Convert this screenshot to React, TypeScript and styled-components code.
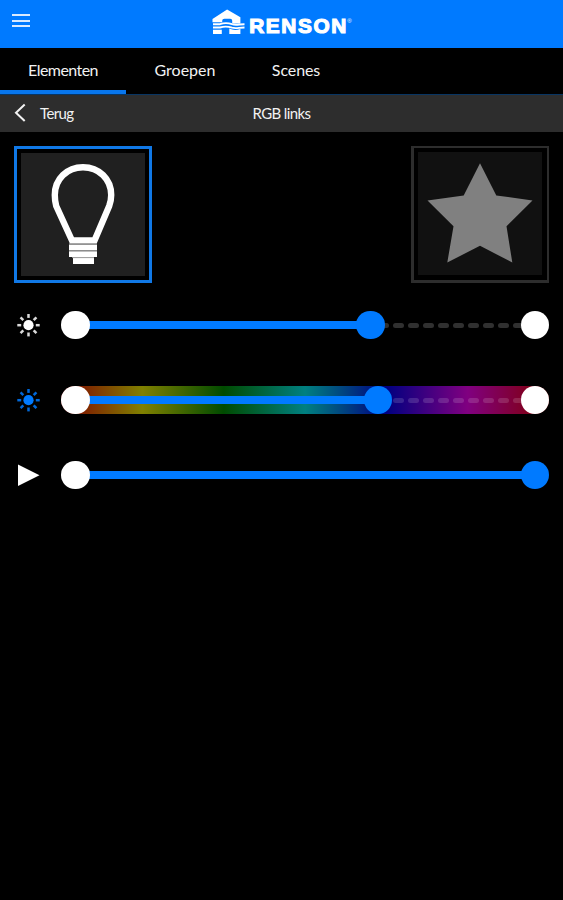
import React from "react";
import styled, { createGlobalStyle } from "styled-components";

const BLUE = "#007aff";

const GlobalStyle = createGlobalStyle`
  * { box-sizing: border-box; }
  body { margin: 0; background: #000; }
`;

const Screen = styled.div`
  display: flex;
  flex-direction: column;
  height: 900px;
  overflow: hidden;
  background: #000;
  color: #f2f2f2;
  font-family: Lato, "Liberation Sans", sans-serif;
`;

const Header = styled.header`
  display: grid;
  grid-template-columns: 60px 1fr 60px;
  height: 48px;
  background: ${BLUE};
`;

const MenuButton = styled.button`
  display: flex;
  flex-direction: column;
  gap: 3.5px;
  padding: 14px 0 0 12px;
  border: 0;
  background: none;
`;

const MenuBar = styled.span`
  width: 18px;
  height: 2px;
  background: #d9eaff;
`;

const Brand = styled.div`
  display: flex;
  justify-content: center;

  svg { display: block; margin-left: 1px; }
`;

const Tabs = styled.nav`
  display: flex;
  height: 47px;
  border-bottom: 1px solid #083563;
`;

const Tab = styled.button<{ $active?: boolean; $width: number; $spacing: number }>`
  width: ${(p) => p.$width}px;
  height: 46px;
  padding: 1px 0 0;
  border: 0;
  border-bottom: 4px solid ${(p) => (p.$active ? "#0876ed" : "transparent")};
  background: none;
  color: inherit;
  font: 400 16px/20px Lato, sans-serif;
  letter-spacing: ${(p) => p.$spacing}px;
  white-space: nowrap;
`;

const SubHeader = styled.div`
  display: grid;
  grid-template-columns: 120px 1fr 120px;
  align-items: center;
  height: 37px;
  padding-bottom: 2px;
  background: #2d2d2d;
  font-size: 15px;
  line-height: 20px;
`;

const BackButton = styled.button`
  display: flex;
  align-items: center;
  gap: 13px;
  padding: 0 0 0 14px;
  border: 0;
  background: none;
  color: inherit;
  font: inherit;
  letter-spacing: -0.6px;
`;

const Title = styled.span`
  text-align: center;
  letter-spacing: -0.6px;
`;

const Tiles = styled.div`
  display: flex;
  justify-content: space-between;
  padding: 14px 14px 0;
`;

const Tile = styled.div<{ $active?: boolean }>`
  width: 138px;
  height: 137px;
  padding: 4px;
  border: 3px solid ${(p) => (p.$active ? "#1078e6" : "#2d2d2d")};
  border-width: ${(p) => (p.$active ? "3px" : "2.5px 2px 3px 3px")};

  svg {
    display: block;
    width: 124px;
    height: 123px;
    background: ${(p) => (p.$active ? "#202020" : "#111")};
  }
`;

const Sliders = styled.div`
  display: flex;
  flex-direction: column;
  gap: 47px;
  padding: 28px 14px 0;
`;

const SliderRow = styled.div`
  display: grid;
  grid-template-columns: 28px 488px;
  column-gap: 19px;
  align-items: center;
  height: 28px;

  > svg { display: block; }
`;

const Track = styled.div<{ $rainbow?: boolean }>`
  position: relative;
  height: 28px;
  border-radius: 14px;
  background: ${(p) =>
    p.$rainbow
      ? "linear-gradient(90deg, #800000 0%, #808000 16.67%, #004b00 33.33%, #008080 50%, #000080 66.67%, #800080 83.33%, #800000 100%)"
      : "none"};
`;

const Dashes = styled.div`
  position: absolute;
  top: 12px;
  left: 17px;
  display: flex;
  gap: 4px;
  width: 443px;
  height: 5px;
  overflow: hidden;
`;

const Dash = styled.span<{ $faint?: boolean }>`
  flex: 0 0 11px;
  border-radius: 2.5px;
  background: rgba(255, 255, 255, ${(p) => (p.$faint ? 0.14 : 0.19)});
`;

const Fill = styled.div`
  position: absolute;
  top: 10px;
  left: 14px;
  height: 8px;
  background: ${BLUE};
`;

const Knob = styled.span<{ $blue?: boolean }>`
  position: absolute;
  top: -0.3px;
  width: 28.6px;
  height: 28.6px;
  margin-left: -14.3px;
  border-radius: 50%;
  background: ${(p) => (p.$blue ? BLUE : "#fff")};
`;

const START = 14.3;
const SPAN = 459.5;

function Slider({ value, rainbow }: { value: number; rainbow?: boolean }) {
  const pos = START + value * SPAN;
  return (
    <Track $rainbow={rainbow}>
      {value < 1 && (
        <Dashes>
          {Array.from({ length: 30 }, (_, i) => (
            <Dash
              key={i}
              $faint={rainbow}
              style={{ visibility: 17 + i * 15 + 11 < pos ? "hidden" : "visible" }}
            />
          ))}
        </Dashes>
      )}
      <Fill style={{ width: pos - 14 }} />
      <Knob style={{ left: START }} />
      {value < 1 && <Knob style={{ left: START + SPAN }} />}
      <Knob $blue style={{ left: pos }} />
    </Track>
  );
}

function Sun({ color }: { color: string }) {
  return (
    <svg width="28" height="28" viewBox="0 0 28 28">
      <circle cx="14.5" cy="14.2" r="5.1" fill={color} />
      {[0, 45, 90, 135, 180, 225, 270, 315].map((a) => (
        <path
          key={a}
          d="M14.5 3V6.9"
          stroke={color}
          strokeWidth="2.5"
          strokeOpacity="0.85"
          transform={`rotate(${a} 14.5 14.2)`}
        />
      ))}
    </svg>
  );
}

function Logo() {
  return (
    <svg width="144" height="48" viewBox="210 0 144 48" fill="#fff">
      <path d="M212.5 19 227.1 9.6 240.4 17.2V23.5H232.2V20.8Q232.2 18.8 230.2 18.8H224.4Q222.2 18.8 222.2 20.8V22.2H212.5Z" />
      <path
        d="M213 24.2H220C225 22.4 228 22.8 232 24.2C236 25.4 239 24.2 244.5 24.2M213 27.5H220C225 25.9 228 26.3 232 27.7C236 28.9 239 27.5 244.5 27.5"
        fill="none"
        stroke="#fff"
        strokeWidth="1.9"
      />
      <path d="M213 29.8H221.8V34H213ZM229.3 28.6Q234.5 31 240.4 29V34H229.3Z" />
      <text
        x="249.2"
        y="33.4"
        fontFamily="'Liberation Sans', sans-serif"
        fontWeight="700"
        fontSize="20.8"
        stroke="#fff"
        strokeWidth="1.2"
        textLength="97"
        lengthAdjust="spacing"
      >
        RENSON
      </text>
      <text x="347.3" y="23" fontFamily="'Liberation Sans', sans-serif" fontSize="6">®</text>
    </svg>
  );
}

export default function App() {
  return (
    <Screen>
      <GlobalStyle />
      <Header>
        <MenuButton aria-label="Menu">
          <MenuBar />
          <MenuBar />
          <MenuBar />
        </MenuButton>
        <Brand>
          <Logo />
        </Brand>
      </Header>
      <Tabs>
        <Tab $active $width={126} $spacing={-0.55}>Elementen</Tab>
        <Tab $width={118} $spacing={0}>Groepen</Tab>
        <Tab $width={104} $spacing={-0.1}>Scenes</Tab>
      </Tabs>
      <SubHeader>
        <BackButton>
          <svg width="13" height="20" viewBox="0 0 13 20" fill="none">
            <path d="M10.7 1.5 2 9.7 10.7 18" stroke="#f2f2f2" strokeWidth="2" />
          </svg>
          Terug
        </BackButton>
        <Title>RGB links</Title>
      </SubHeader>
      <Tiles>
        <Tile $active>
          <svg viewBox="21 153 124 123">
            <path
              d="M72 240.5 56.2 206Q54.8 201 54.8 195C54.8 179 67 167.2 83 167.2S111.2 179 111.2 195Q111.2 201 109.2 206L94.5 240.5Z"
              fill="none"
              stroke="#fff"
              strokeWidth="6.4"
            />
            <path d="M69 244.4H97V250.2H69ZM69 251.2H97V257H94V264H73V257H69Z" fill="#fff" />
            <path d="M69 243.8H97M69 250.7H97M72 257.6H94" stroke="#999" />
          </svg>
        </Tile>
        <Tile>
          <svg viewBox="418 153 124 123">
            <path
              d="M480 164.2 496.3 196.4 532.5 201.5 506.5 227.3 512.3 263.5 480 246.8 447.3 263.5 453.5 227.3 427.5 201.5 463.7 196.4Z"
              fill="#808080"
            />
          </svg>
        </Tile>
      </Tiles>
      <Sliders>
        <SliderRow>
          <Sun color="#fff" />
          <Slider value={0.642} />
        </SliderRow>
        <SliderRow>
          <Sun color={BLUE} />
          <Slider value={0.659} rainbow />
        </SliderRow>
        <SliderRow>
          <svg width="28" height="28" viewBox="0 0 28 28">
            <path d="M4 3.4 25.5 14.2 4 25Z" fill="#fff" />
          </svg>
          <Slider value={1} />
        </SliderRow>
      </Sliders>
    </Screen>
  );
}
